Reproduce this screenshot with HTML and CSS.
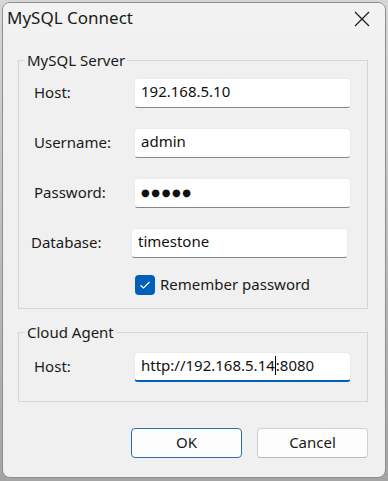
FILE: index.html
```html
<!DOCTYPE html>
<html lang="en">
<head>
<meta charset="utf-8">
<title>MySQL Connect</title>
<link rel="stylesheet" href="styles.css">
</head>
<body>
<div class="window">
  <div class="titlebar">
    <span class="title">MySQL Connect</span>
    <svg class="close" width="16" height="16" viewBox="0 0 16 16" aria-label="Close">
      <path d="M1 1 L15 15 M15 1 L1 15" stroke="#1b1b1b" stroke-width="1.2" fill="none"/>
    </svg>
  </div>
  <div class="content">
    <fieldset class="group server">
      <legend>MySQL Server</legend>
      <div class="row">
        <span class="label">Host:</span>
        <div class="field">192.168.5.10</div>
      </div>
      <div class="row">
        <span class="label">Username:</span>
        <div class="field">admin</div>
      </div>
      <div class="row">
        <span class="label">Password:</span>
        <div class="field dots">●●●●●</div>
      </div>
      <div class="row shift">
        <span class="label">Database:</span>
        <div class="field">timestone</div>
      </div>
      <div class="check-row">
        <span class="checkbox">
          <svg width="20" height="20" viewBox="0 0 20 20"><path d="M5.5 10.2 L8.5 13 L14.5 7" stroke="#fff" stroke-width="1.2" fill="none"/></svg>
        </span>
        <span class="check-label">Remember password</span>
      </div>
    </fieldset>
    <fieldset class="group agent">
      <legend>Cloud Agent</legend>
      <div class="row">
        <span class="label">Host:</span>
        <div class="field focused">http://192.168.5.14<span class="caret"></span>:8080</div>
      </div>
    </fieldset>
    <div class="buttons">
      <button class="btn default">OK</button>
      <button class="btn">Cancel</button>
    </div>
  </div>
</div>
</body>
</html>
```

FILE: styles.css
```css
html, body {
  margin: 0;
  padding: 0;
}
body {
  width: 388px;
  height: 481px;
  background: linear-gradient(#d6d6d6, #a4a4a4);
  font-family: "Noto Sans", "Open Sans", sans-serif;
  color: #1a1a1a;
  overflow: hidden;
}
.window {
  margin: 2px 0 0 2px;
  width: 384px;
  height: 476px;
  box-sizing: border-box;
  border: 1px solid #8e8e8e;
  border-radius: 8px;
  background: #f0f0f0;
  display: flex;
  flex-direction: column;
  overflow: hidden;
}
.titlebar {
  height: 30px;
  display: flex;
  align-items: center;
  justify-content: space-between;
  padding: 0 15px 0 4px;
  background: #f2f2f2;
}
.title {
  font-size: 17px;
  line-height: 30px;
  color: #1a1a1a;
}
.close {
  display: block;
  margin-top: 1px;
}
.content {
  display: flex;
  flex-direction: column;
}
.group {
  margin: 0 17px 0 15px;
  border: 1px solid #d6d6d6;
  border-radius: 0;
  min-width: 0;
  display: flex;
  flex-direction: column;
}
.group legend {
  font-size: 15px;
  line-height: 20px;
  padding: 0 2px;
  margin-left: -9px;
  color: #1a1a1a;
}
.server {
  margin-top: 17px;
  padding: 8px 16px 13px 15px;
  gap: 20px;
}
.agent {
  margin-top: 13px;
  padding: 10px 16px 19px 15px;
}
.row {
  display: flex;
  align-items: center;
  height: 30px;
}
.row.shift {
  margin-left: -3px;
}
.label {
  width: 100px;
  font-size: 15px;
  flex: none;
  padding-bottom: 3px;
}
.field {
  box-sizing: border-box;
  width: 217px;
  height: 30px;
  background: #ffffff;
  border: 1px solid #ebebeb;
  border-bottom-color: #868686;
  border-radius: 4px;
  padding: 0 6px 2px;
  font-size: 15px;
  line-height: 25px;
  color: #111;
  white-space: nowrap;
}
.field.dots {
  font-size: 10px;
  letter-spacing: 1.6px;
  font-family: "DejaVu Sans", sans-serif;
  line-height: 27px;
}
.field.focused {
  border-bottom: 2px solid #005fb8;
  line-height: 25px;
}
.caret {
  display: inline-block;
  width: 1px;
  height: 19px;
  background: #000;
  vertical-align: -4px;
}
.check-row {
  display: flex;
  align-items: center;
  height: 20px;
  margin-top: -3px;
  padding-left: 101px;
  gap: 5px;
}
.checkbox {
  width: 20px;
  height: 20px;
  border-radius: 4px;
  background: #005fb8;
  display: flex;
}
.check-label {
  font-size: 15px;
  padding-bottom: 2px;
}
.buttons {
  display: flex;
  justify-content: flex-end;
  gap: 15px;
  margin: 26px 17px 0 0;
}
.btn {
  width: 111px;
  height: 30px;
  box-sizing: border-box;
  background: #fdfdfd;
  border: 1px solid #d0d0d0;
  border-bottom-color: #b8b8b8;
  border-radius: 4px;
  font-family: "Noto Sans", "Open Sans", sans-serif;
  font-size: 15px;
  color: #1a1a1a;
  padding: 0 0 2px;
}
.btn.default {
  border: 1px solid #2a6fb4;
}
```
